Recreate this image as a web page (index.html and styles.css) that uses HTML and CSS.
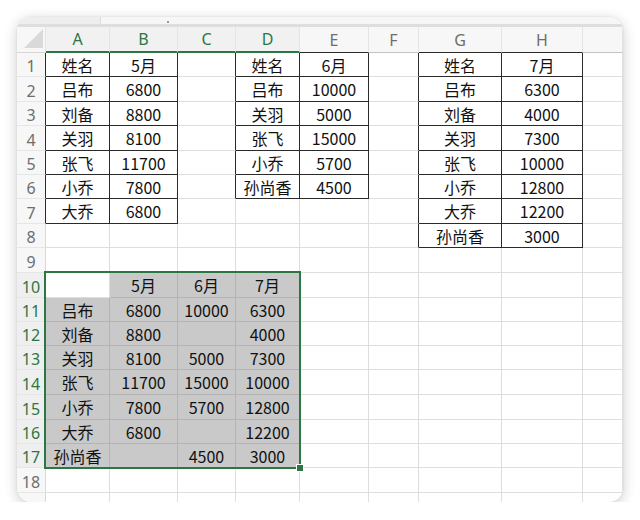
FILE: index.html
```html
<!DOCTYPE html>
<html lang="zh">
<head>
<meta charset="utf-8">
<link rel="stylesheet" href="styles.css">
</head>
<body>
<div class="window">
  <div class="topbar"><div class="tb-left"></div><div class="tb-right"><span class="tick"></span></div></div>
  <div class="sheet">
    <div class="c h corner"><svg width="19" height="19" viewBox="0 0 19 19"><polygon points="19,0 19,19 0,19" fill="#d9d9d9"/></svg></div>
    <div class="c h hs">A</div><div class="c h hs">B</div><div class="c h hs">C</div><div class="c h hs">D</div>
    <div class="c h bt">E</div><div class="c h">F</div><div class="c h bt">G</div><div class="c h bt">H</div><div class="c h"></div>

    <div class="c rn bl">1</div><div class="c t">姓名</div><div class="c t">5月</div><div class="c bl"></div><div class="c t">姓名</div><div class="c t">6月</div><div class="c bl"></div><div class="c t">姓名</div><div class="c t">7月</div><div class="c"></div>
    <div class="c rn bl">2</div><div class="c t">吕布</div><div class="c t">6800</div><div class="c bl"></div><div class="c t">吕布</div><div class="c t">10000</div><div class="c bl"></div><div class="c t">吕布</div><div class="c t">6300</div><div class="c"></div>
    <div class="c rn bl">3</div><div class="c t">刘备</div><div class="c t">8800</div><div class="c bl"></div><div class="c t">关羽</div><div class="c t">5000</div><div class="c bl"></div><div class="c t">刘备</div><div class="c t">4000</div><div class="c"></div>
    <div class="c rn bl">4</div><div class="c t">关羽</div><div class="c t">8100</div><div class="c bl"></div><div class="c t">张飞</div><div class="c t">15000</div><div class="c bl"></div><div class="c t">关羽</div><div class="c t">7300</div><div class="c"></div>
    <div class="c rn bl">5</div><div class="c t">张飞</div><div class="c t">11700</div><div class="c bl"></div><div class="c t">小乔</div><div class="c t">5700</div><div class="c bl"></div><div class="c t">张飞</div><div class="c t">10000</div><div class="c"></div>
    <div class="c rn bl">6</div><div class="c t">小乔</div><div class="c t">7800</div><div class="c bl"></div><div class="c t">孙尚香</div><div class="c t">4500</div><div class="c bl"></div><div class="c t">小乔</div><div class="c t">12800</div><div class="c"></div>
    <div class="c rn bl">7</div><div class="c t">大乔</div><div class="c t">6800</div><div class="c"></div><div class="c"></div><div class="c"></div><div class="c bl"></div><div class="c t">大乔</div><div class="c t">12200</div><div class="c"></div>
    <div class="c rn">8</div><div class="c"></div><div class="c"></div><div class="c"></div><div class="c"></div><div class="c"></div><div class="c bl"></div><div class="c t">孙尚香</div><div class="c t">3000</div><div class="c"></div>
    <div class="c rn">9</div><div class="c"></div><div class="c"></div><div class="c"></div><div class="c"></div><div class="c"></div><div class="c"></div><div class="c"></div><div class="c"></div><div class="c"></div>

    <div class="c rn rs">10</div><div class="c"></div><div class="c g">5月</div><div class="c g">6月</div><div class="c g">7月</div><div class="c"></div><div class="c"></div><div class="c"></div><div class="c"></div><div class="c"></div>
    <div class="c rn rs">11</div><div class="c g">吕布</div><div class="c g">6800</div><div class="c g">10000</div><div class="c g">6300</div><div class="c"></div><div class="c"></div><div class="c"></div><div class="c"></div><div class="c"></div>
    <div class="c rn rs">12</div><div class="c g">刘备</div><div class="c g">8800</div><div class="c g"></div><div class="c g">4000</div><div class="c"></div><div class="c"></div><div class="c"></div><div class="c"></div><div class="c"></div>
    <div class="c rn rs">13</div><div class="c g">关羽</div><div class="c g">8100</div><div class="c g">5000</div><div class="c g">7300</div><div class="c"></div><div class="c"></div><div class="c"></div><div class="c"></div><div class="c"></div>
    <div class="c rn rs">14</div><div class="c g">张飞</div><div class="c g">11700</div><div class="c g">15000</div><div class="c g">10000</div><div class="c"></div><div class="c"></div><div class="c"></div><div class="c"></div><div class="c"></div>
    <div class="c rn rs">15</div><div class="c g">小乔</div><div class="c g">7800</div><div class="c g">5700</div><div class="c g">12800</div><div class="c"></div><div class="c"></div><div class="c"></div><div class="c"></div><div class="c"></div>
    <div class="c rn rs">16</div><div class="c g">大乔</div><div class="c g">6800</div><div class="c g"></div><div class="c g">12200</div><div class="c"></div><div class="c"></div><div class="c"></div><div class="c"></div><div class="c"></div>
    <div class="c rn rs">17</div><div class="c g">孙尚香</div><div class="c g"></div><div class="c g">4500</div><div class="c g">3000</div><div class="c"></div><div class="c"></div><div class="c"></div><div class="c"></div><div class="c"></div>
    <div class="c rn">18</div><div class="c"></div><div class="c"></div><div class="c"></div><div class="c"></div><div class="c"></div><div class="c"></div><div class="c"></div><div class="c"></div><div class="c"></div>
    <div class="c rn"></div><div class="c"></div><div class="c"></div><div class="c"></div><div class="c"></div><div class="c"></div><div class="c"></div><div class="c"></div><div class="c"></div><div class="c"></div>

    <div class="selection"><div class="handle"></div></div>
  </div>
</div>
</body>
</html>
```
FILE: styles.css
```css
html, body {
  margin: 0;
  padding: 0;
  background: #ffffff;
}
body {
  padding: 17px 0 0 17px;
  font-family: "Noto Sans CJK SC", "Noto Sans", sans-serif;
}
.window {
  width: 606px;
  height: 485px;
  border-radius: 14px;
  overflow: hidden;
  background: #ffffff;
  box-shadow: 0 3px 14px rgba(0, 0, 0, 0.2), 0 0 2px rgba(0, 0, 0, 0.1);
}
.topbar {
  height: 10px;
  box-sizing: border-box;
  display: flex;
  border-bottom: 3px solid #dedede;
}
.tb-left {
  width: 83px;
  background: #eeeeee;
  border-right: 1px solid #dcdcdc;
}
.tb-right {
  flex: 1;
  background: #f6f6f6;
  position: relative;
}
.tick {
  position: absolute;
  left: 66px;
  top: 4px;
  width: 2px;
  height: 2px;
  background: #9a9a9a;
}
.sheet {
  position: relative;
  display: grid;
  grid-template-columns: 29px 64px 68px 58px 64px 69px 50px 83px 81px 40px;
  grid-template-rows: 26px 24px 25px 24px 25px 24px 24px 25px 24px 25px 25px 24px 24px 24px 25px 25px 24px 24px 25px 24px;
}
.c {
  box-sizing: border-box;
  border-right: 1px solid #dedede;
  border-bottom: 1px solid #dedede;
  display: flex;
  align-items: center;
  justify-content: center;
  font-size: 16px;
  color: #111111;
  white-space: nowrap;
  overflow: hidden;
}
.h {
  background: #f7f7f7;
  color: #6e6e6e;
  font-family: "Noto Sans", sans-serif;
  font-size: 16px;
  border-bottom: 1px solid #c4c4c4;
  border-right-color: #e4e4e4;
}
.hs {
  color: #2b7744;
  background: #f1f1f1;
  border-bottom: 2px solid #2b7744;
}
.bt {
  border-bottom-color: #2a2a2a;
}
.corner {
  align-items: flex-end;
  justify-content: flex-end;
  padding: 0 2px 4px 0;
  border-bottom-color: #d6d6d6;
}
.rn {
  background: #f7f7f7;
  color: #6e6e6e;
  font-family: "Noto Sans", sans-serif;
  font-size: 16px;
  padding-top: 3px;
  border-right-color: #d8d8d8;
  border-bottom-color: #e6e6e6;
}
.rs {
  color: #2b7744;
  background: #efefef;
}
.t {
  border-right: 1px solid #2a2a2a;
  border-bottom: 1px solid #2a2a2a;
}
.bl {
  border-right-color: #2a2a2a;
}
.g {
  background: #c9c9c9;
  border-right-color: #b3b3b3;
  border-bottom-color: #b3b3b3;
}
.selection {
  position: absolute;
  left: 27px;
  top: 244px;
  width: 257px;
  height: 198px;
  box-sizing: border-box;
  border: 2px solid #2b7744;
  pointer-events: none;
}
.handle {
  position: absolute;
  right: -5px;
  bottom: -5px;
  width: 8px;
  height: 8px;
  box-sizing: border-box;
  background: #2b7744;
  border: 1px solid #ffffff;
}
```
